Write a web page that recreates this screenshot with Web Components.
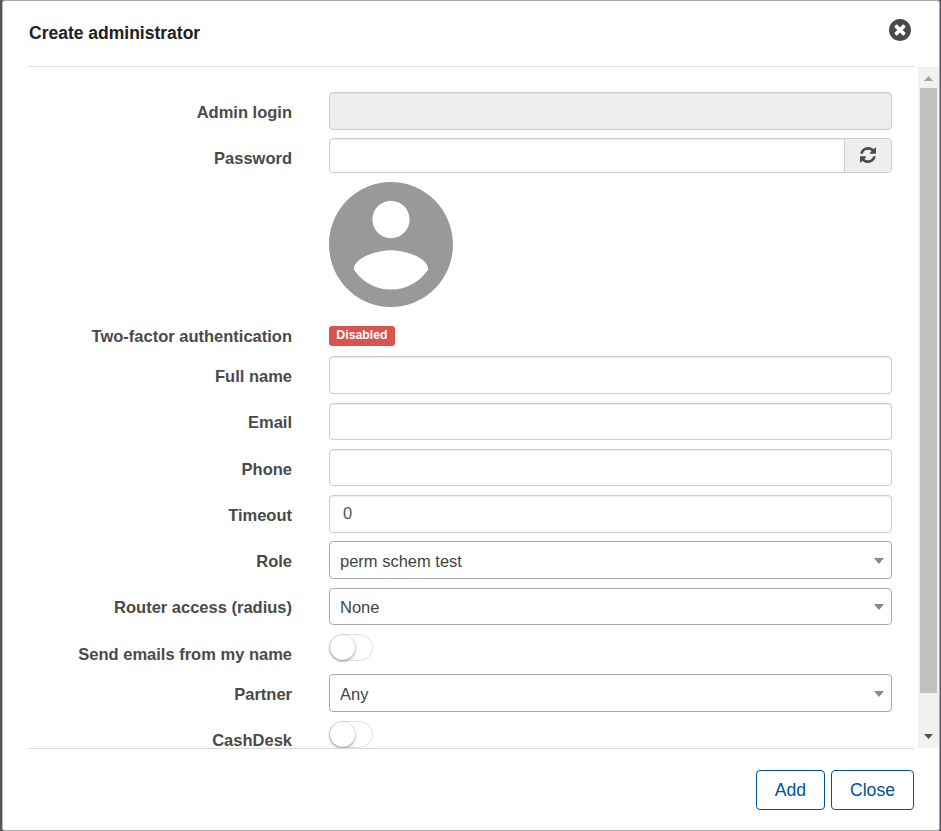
<!DOCTYPE html>
<html lang="en">
<head>
<meta charset="utf-8">
<title>Create administrator</title>
<style>
html,body{margin:0;height:100%;overflow:hidden}
body{background:#53565e;font-family:"Liberation Sans",Arial,sans-serif;font-size:16.5px;color:#4a4a4a}
</style>
</head>
<body>
<admin-dialog>
  <span slot="title">Create administrator</span>
  <form-row style="--label-y:9px;height:46px" label="Admin login"><text-field disabled style="height:38px"></text-field></form-row>
  <form-row style="height:44px;--label-y:9px" label="Password"><password-field></password-field></form-row>
  <form-row style="height:144px"><user-avatar></user-avatar></form-row>
  <form-row style="height:30px;--label-y:-1px" label="Two-factor authentication"><status-badge>Disabled</status-badge></form-row>
  <form-row style="height:47px" label="Full name"><text-field style="height:38px"></text-field></form-row>
  <form-row style="height:46px;--label-y:8px" label="Email"><text-field></text-field></form-row>
  <form-row style="height:46px" label="Phone"><text-field></text-field></form-row>
  <form-row style="height:46px" label="Timeout"><text-field style="height:38px">0</text-field></form-row>
  <form-row style="height:47px" label="Role"><select-field style="height:38px">perm schem test</select-field></form-row>
  <form-row style="height:46px;--label-y:8px" label="Router access (radius)"><select-field>None</select-field></form-row>
  <form-row style="height:40px" label="Send emails from my name"><toggle-switch></toggle-switch></form-row>
  <form-row style="height:47px" label="Partner"><select-field style="height:38px">Any</select-field></form-row>
  <form-row style="height:47px;--label-y:8px" label="CashDesk"><toggle-switch></toggle-switch></form-row>
  <dialog-button slot="actions" style="width:69px">Add</dialog-button>
  <dialog-button slot="actions" style="width:83px">Close</dialog-button>
</admin-dialog>
<script>
function define(name, html, setup) {
  const template = document.createElement('template');
  template.innerHTML = html;
  customElements.define(name, class extends HTMLElement {
    constructor() {
      super();
      this.attachShadow({ mode: 'open' }).append(template.content.cloneNode(true));
    }
    connectedCallback() { if (setup) setup(this); }
  });
}

define('scroll-rail', `
<style>
:host{display:flex;flex-direction:column;width:21px;background:#f1f1f1;height:681px}
svg{display:block;width:21px;flex:none}
.thumb{height:605px;width:17px;margin-left:2px;background:#c1c1c1}
</style>
<svg height="21" viewBox="0 0 21 21"><path d="M6 14h9l-4.5-5z" fill="#a0a0a0"/></svg>
<div class="thumb"></div>
<svg height="55" viewBox="0 0 21 55"><path d="M6 41h9l-4.5 5z" fill="#505050"/></svg>`);

define('admin-dialog', `
<style>
:host{display:flex;flex-direction:column;box-sizing:border-box;width:938px;height:831px;margin-left:2px;background:#fff;border:1px solid #aaa;border-left-color:#bbb;border-radius:3px}
header{box-sizing:border-box;height:66px;margin:0 25px 0 26px;border-bottom:1px solid #ddd;display:flex;justify-content:space-between;flex:none}
h1{margin:21px 0 0;font-size:17.5px;line-height:22px;color:#212121;font-weight:bold}
header svg{width:22px;height:22px;margin:18px 3px 0 0}
main{display:flex;height:681px;flex:none}
.form{width:915px;height:681px;overflow:hidden;padding-top:25px;box-sizing:border-box}
footer{margin:0 25px 0 26px;border-top:1px solid #ddd;padding-top:21px;display:flex;gap:6px;justify-content:flex-end}
</style>
<header><h1><slot name="title"></slot></h1>
<svg viewBox="128 128 1536 1536"><path fill="#4a4a4a" d="M1277 1122q0-26-19-45l-181-181 181-181q19-19 19-45 0-27-19-46l-90-90q-19-19-46-19-26 0-45 19l-181 181-181-181q-19-19-45-19-27 0-46 19l-90 90q-19 19-19 46 0 26 19 45l181 181-181 181q-19 19-19 45 0 27 19 46l90 90q19 19 46 19 26 0 45-19l181-181 181 181q19 19 45 19 27 0 46-19l90-90q19-19 19-46zm387-226q0 209-103 385.5t-279.5 279.5-385.5 103-385.5-103-279.5-279.5-103-385.5 103-385.5 279.5-279.5 385.5-103 385.5 103 279.5 279.5 103 385.5z"/></svg>
</header>
<main><div class="form"><slot></slot></div><scroll-rail></scroll-rail></main>
<footer><slot name="actions"></slot></footer>`);

define('form-row', `
<style>
:host{display:grid;grid-template-columns:289px 563px;column-gap:37px;align-items:start}
label{display:block;text-align:right;font-weight:bold;line-height:22px;margin-top:var(--label-y,9px);white-space:nowrap}
</style>
<label></label><slot></slot>`, el => {
  el.shadowRoot.querySelector('label').textContent = el.getAttribute('label') || '';
});

define('text-field', `
<style>
:host{display:flex;align-items:center;box-sizing:border-box;height:37px;padding:0 13px 2px;border:1px solid #ccc;border-radius:4px;box-shadow:inset 0 1px 1px rgba(0,0,0,.075);background:#fff;color:#555}
:host([disabled]){background:#eee}
</style>
<slot></slot>`);

define('password-field', `
<style>
:host{display:flex;box-sizing:border-box;height:35px;border:1px solid #ccc;border-radius:4px;overflow:hidden}
.value{flex:1;box-shadow:inset 0 1px 1px rgba(0,0,0,.075)}
.refresh{box-sizing:border-box;width:47px;border-left:1px solid #ccc;background:#eee;display:flex;justify-content:center;align-items:center;padding-bottom:2px}
svg{width:16px;height:16px}
</style>
<div class="value"></div>
<div class="refresh"><svg viewBox="128 128 1536 1536"><path fill="#4a4a4a" d="M1639 1056q0 5-1 7-64 268-268 434.5t-478 166.5q-146 0-282.5-55t-243.5-157l-129 129q-19 19-45 19t-45-19-19-45v-448q0-26 19-45t45-19h448q26 0 45 19t19 45-19 45l-137 137q71 66 161 102t187 36q134 0 250-65t186-179q11-17 53-117 8-23 30-23h192q13 0 22.5 9.5t9.5 22.5zm25-800v448q0 26-19 45t-45 19h-448q-26 0-45-19t-19-45 19-45l138-138q-148-137-349-137-134 0-250 65t-186 179q-11 17-53 117-8 23-30 23h-199q-13 0-22.5-9.5t-9.5-22.5v-7q65-268 270-434.5t480-166.5q146 0 284 55.5t245 156.5l130-129q19-19 45-19t45 19 19 45z"/></svg></div>`);

define('user-avatar', `
<style>:host{display:block;width:124px;height:125px}svg{display:block;width:124px;height:125px}</style>
<svg viewBox="2 2 20 20" preserveAspectRatio="none"><path fill="#999" d="M12 2C6.48 2 2 6.48 2 12s4.48 10 10 10 10-4.48 10-10S17.52 2 12 2zm0 3c1.66 0 3 1.34 3 3s-1.34 3-3 3-3-1.34-3-3 1.34-3 3-3zm0 14.2c-2.5 0-4.71-1.28-6-3.22.03-1.99 4-3.08 6-3.08 1.99 0 5.97 1.09 6 3.08-1.29 1.94-3.5 3.22-6 3.22z"/></svg>`);

define('status-badge', `
<style>:host{display:block;box-sizing:border-box;width:66px;height:20px;background:#d9534f;border-radius:3px;color:#fff;font-size:12.3px;font-weight:bold;text-align:center;line-height:19px}</style>
<slot></slot>`);

define('select-field', `
<style>
:host{display:flex;align-items:center;justify-content:space-between;box-sizing:border-box;height:37px;padding:2px 7px 0 10px;border:1px solid #aaa;border-radius:4px;background:#fff;color:#444}
svg{width:10px;height:6px;margin-top:-1px}
</style>
<span><slot></slot></span><svg viewBox="0 0 10 6"><path d="M0 0h10L5 6z" fill="#888"/></svg>`);

define('toggle-switch', `
<style>
:host{display:block;box-sizing:border-box;width:44px;height:27px;border:1px solid #dfdfdf;border-radius:14px;background:#fff}
i{display:block;width:25px;height:25px;border-radius:50%;background:#fff;box-shadow:0 1px 3px rgba(0,0,0,.45)}
</style>
<i></i>`);

define('dialog-button', `
<style>:host{display:flex;align-items:center;justify-content:center;box-sizing:border-box;height:40px;border:1px solid #005399;border-radius:4px;color:#005399;font-size:17.6px;background:#fff}</style>
<slot></slot>`);
</script>
</body>
</html>
